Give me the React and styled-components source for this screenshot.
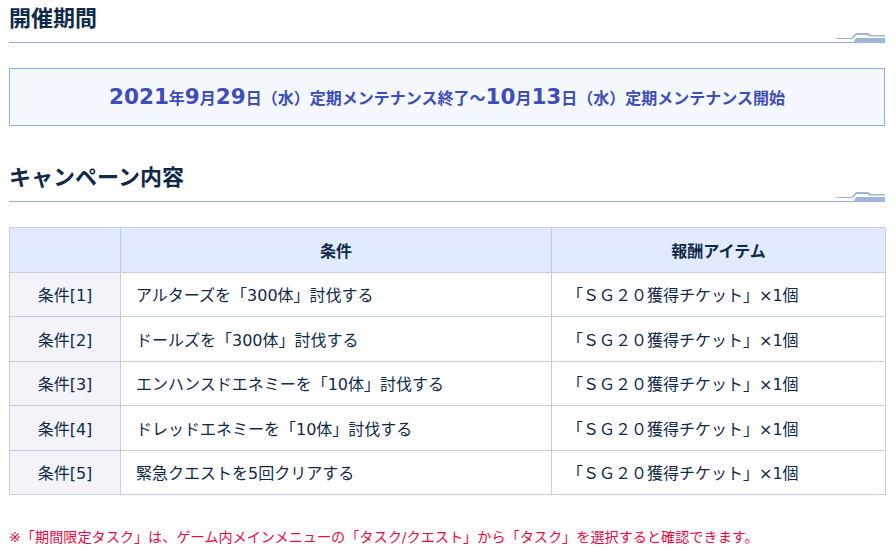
import styled, { createGlobalStyle } from "styled-components";

const GlobalStyle = createGlobalStyle`
    html, body { margin: 0; padding: 0; background: #fff; overflow: hidden; }
    body { font-family: "DejaVu Sans", "Noto Sans CJK JP", sans-serif; color: #0f2a48; }
`

const Page = styled.div`
    width: 876px;
    height: 558px;
    padding: 0 11px 0 9px;
`

const Heading = styled.div`
    position: relative;
    height: ${props => props.h}px;
    box-sizing: border-box;
    border-bottom: 1px solid #93abd8;
    font-size: 22px;
    font-weight: 700;
    line-height: 32px;
    padding-top: ${props => props.top}px;
    color: #0f2a48;
`

const Deco = styled.svg`
    position: absolute;
    right: 0;
    bottom: -1px;
    width: 49px;
    height: 10px;
`

const Notice = styled.div`
    height: 58px;
    box-sizing: border-box;
    margin: 25px 0 36px;
    border: 1px solid #88b0f0;
    background: #f4f8ff;
    color: #3f4dbb;
    font-size: 16px;
    font-weight: 700;
    display: flex;
    align-items: center;
    justify-content: center;
    white-space: nowrap;
`

const Big = styled.span`
    font-size: 21.5px;
    line-height: 1;
`

const Table = styled.div`
    margin-top: 25px;
    display: grid;
    grid-template-columns: 111px 431px 334px;
    grid-auto-rows: 44.5px;
    border-top: 1px solid #c3cfe0;
    border-left: 1px solid #c3cfe0;
    font-size: 16px;
`

const Cell = styled.div`
    border-right: 1px solid #c3cfe0;
    border-bottom: 1px solid #c3cfe0;
    display: flex;
    align-items: center;
    padding: 0 15px;
    white-space: nowrap;
    min-width: 0;
    background: #fff;
`

const HeadCell = styled(Cell)`
    background: #e2ebfd;
    justify-content: center;
    font-weight: 700;
`

const LabelCell = styled(Cell)`
    background: #f2f4f9;
    justify-content: center;
`

const Note = styled.p`
    margin: 32px 0 0;
    color: #f0073f;
    font-size: 14.15px;
    line-height: 20px;
    white-space: nowrap;
`

const rows = [
    ["条件[1]", "アルターズを「300体」討伐する"],
    ["条件[2]", "ドールズを「300体」討伐する"],
    ["条件[3]", "エンハンスドエネミーを「10体」討伐する"],
    ["条件[4]", "ドレッドエネミーを「10体」討伐する"],
    ["条件[5]", "緊急クエストを5回クリアする"],
];

function Ornament() {
    return (
        <Deco viewBox="0 0 49 10">
            <path d="M0 5H15L20 0H32L35 2H49V3.5H34L31 2H21L16 6H0Z" fill="#a3b5d6" />
            <path d="M17 10L20 5H49V10Z" fill="#a3b5d6" />
        </Deco>
    )
}

export default function App() {
    return (
        <Page>
            <GlobalStyle />
            <Heading h={43} top={3}>開催期間<Ornament /></Heading>
            <Notice>
                <Big>2021</Big>年<Big>9</Big>月<Big>29</Big>日（水）定期メンテナンス終了～<Big>10</Big>月<Big>13</Big>日（水）定期メンテナンス開始
            </Notice>
            <Heading h={40} top={0}>キャンペーン内容<Ornament /></Heading>
            <Table>
                <HeadCell />
                <HeadCell>条件</HeadCell>
                <HeadCell>報酬アイテム</HeadCell>
                {rows.map((row) => (
                    <Row key={row[0]} label={row[0]} text={row[1]} />
                ))}
            </Table>
            <Note>※「期間限定タスク」は、ゲーム内メインメニューの「タスク/クエスト」から「タスク」を選択すると確認できます。</Note>
        </Page>
    )
}

function Row({ label, text }) {
    return (
        <>
            <LabelCell>{label}</LabelCell>
            <Cell>{text}</Cell>
            <Cell>「ＳＧ２０獲得チケット」×1個</Cell>
        </>
    )
}
